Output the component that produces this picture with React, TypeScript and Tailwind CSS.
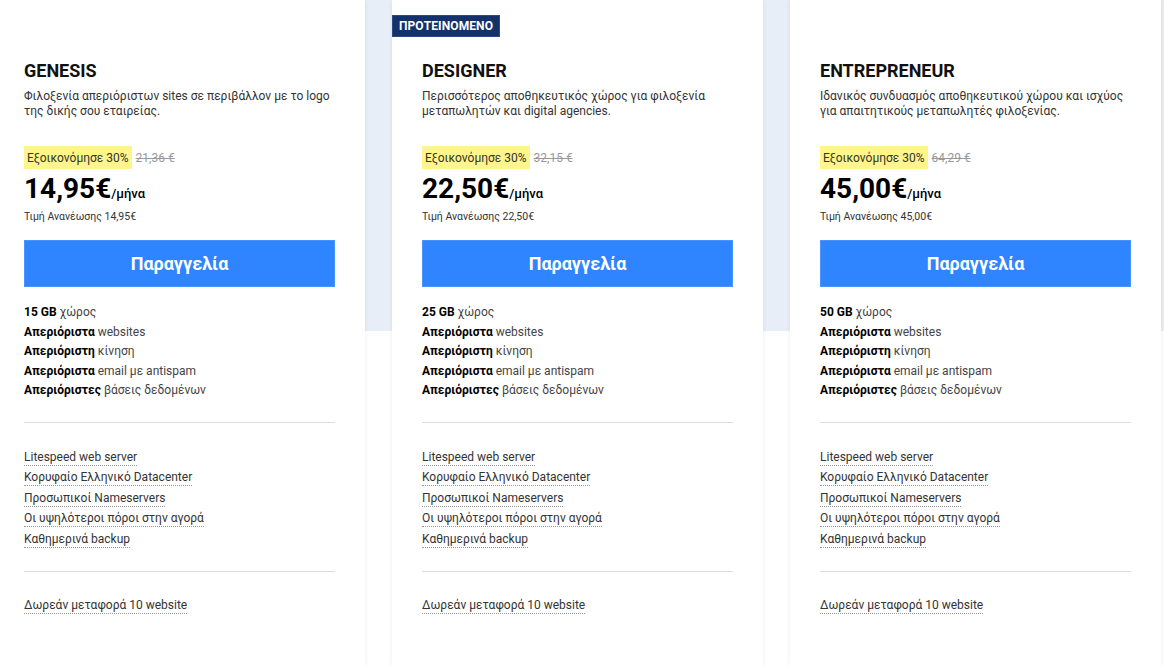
import React from 'react';

interface Plan {
  name: string;
  desc: string;
  oldPrice: string;
  price: string;
  renewal: string;
  space: string;
  featured?: boolean;
}

const plans: Plan[] = [
  {
    name: 'GENESIS',
    desc: 'Φιλοξενία απεριόριστων sites σε περιβάλλον με το logo της δικής σου εταιρείας.',
    oldPrice: '21,36 €',
    price: '14,95€',
    renewal: 'Τιμή Ανανέωσης 14,95€',
    space: '15 GB',
  },
  {
    name: 'DESIGNER',
    desc: 'Περισσότερος αποθηκευτικός χώρος για φιλοξενία μεταπωλητών και digital agencies.',
    oldPrice: '32,15 €',
    price: '22,50€',
    renewal: 'Τιμή Ανανέωσης 22,50€',
    space: '25 GB',
    featured: true,
  },
  {
    name: 'ENTREPRENEUR',
    desc: 'Ιδανικός συνδυασμός αποθηκευτικού χώρου και ισχύος για απαιτητικούς μεταπωλητές φιλοξενίας.',
    oldPrice: '64,29 €',
    price: '45,00€',
    renewal: 'Τιμή Ανανέωσης 45,00€',
    space: '50 GB',
  },
];

const links = [
  'Litespeed web server',
  'Κορυφαίο Ελληνικό Datacenter',
  'Προσωπικοί Nameservers',
  'Οι υψηλότεροι πόροι στην αγορά',
  'Καθημερινά backup',
];

const LinkText: React.FC<{ children: React.ReactNode }> = ({ children }) => (
  <span className="text-[#333] border-b border-dotted border-[#999] pb-[1px]">{children}</span>
);

const PlanCard: React.FC<{ plan: Plan }> = ({ plan }) => {
  const features: [string, string][] = [
    [plan.space, 'χώρος'],
    ['Απεριόριστα', 'websites'],
    ['Απεριόριστη', 'κίνηση'],
    ['Απεριόριστα', 'email με antispam'],
    ['Απεριόριστες', 'βάσεις δεδομένων'],
  ];

  return (
    <div className="w-[371px] shrink-0 h-full bg-white pt-[13px] shadow-[0_0_5px_rgba(0,0,0,0.08)]">
      <div className="h-[22px]">
        {plan.featured && (
          <span className="inline-flex h-[22px] w-[108px] items-center justify-center bg-[#13326b] border border-[#2a4a85] text-white text-[12px] font-bold tracking-[0.1px]">
            ΠΡΟΤΕΙΝΟΜΕΝΟ
          </span>
        )}
      </div>

      <div className="px-[30px]">
        <h2 className="mt-[24px] text-[18px] leading-[24px] font-bold text-[#111]">{plan.name}</h2>
        <p className="mt-[6px] text-[12px] leading-[14.5px] text-[#333]">{plan.desc}</p>

        <div className="mt-[28px] flex items-center">
          <span className="bg-[#fff58a] px-[3px] h-[23px] flex items-center text-[12px] text-[#333]">
            Εξοικονόμησε 30%
          </span>
          <span className="ml-[4px] text-[12px] text-[#999] line-through">{plan.oldPrice}</span>
        </div>

        <div className="mt-[4px] flex items-baseline leading-[32px]">
          <span className="text-[28px] font-bold text-black">{plan.price}</span>
          <span className="text-[13px] font-medium text-black">/μήνα</span>
        </div>
        <div className="text-[10.5px] leading-[14px] text-[#333]">{plan.renewal}</div>

        <button className="mt-[16px] w-full h-[47px] bg-[#2f84ff] border border-[#4a94ff] text-white text-[18px] font-bold">
          Παραγγελία
        </button>

        <ul className="mt-[16px] text-[12px] leading-[19.5px]">
          {features.map(([b, r], i) => (
            <li key={i}>
              <span className="font-bold text-black">{b}</span>{' '}
              <span className="text-[#444]">{r}</span>
            </li>
          ))}
        </ul>

        <div className="mt-[21px] border-t border-[#ddd]" />

        <ul className="mt-[24px] text-[12px] leading-[20.5px]">
          {links.map((l) => (
            <li key={l}>
              <LinkText>{l}</LinkText>
            </li>
          ))}
        </ul>

        <div className="mt-[22px] border-t border-[#ddd]" />

        <div className="mt-[23px] text-[12px] leading-[20.5px]">
          <LinkText>Δωρεάν μεταφορά 10 website</LinkText>
        </div>
      </div>
    </div>
  );
};

export default function App() {
  return (
    <div
      className="w-[1164px] h-[666px] overflow-hidden bg-[linear-gradient(to_bottom,#e8eef8_331px,#ffffff_331px)]"
      style={{ fontFamily: 'Roboto, "Noto Sans", sans-serif' }}
    >
      <div className="flex h-full gap-[27px] ml-[-6px]">
        {plans.map((p) => (
          <PlanCard key={p.name} plan={p} />
        ))}
      </div>
    </div>
  );
}
